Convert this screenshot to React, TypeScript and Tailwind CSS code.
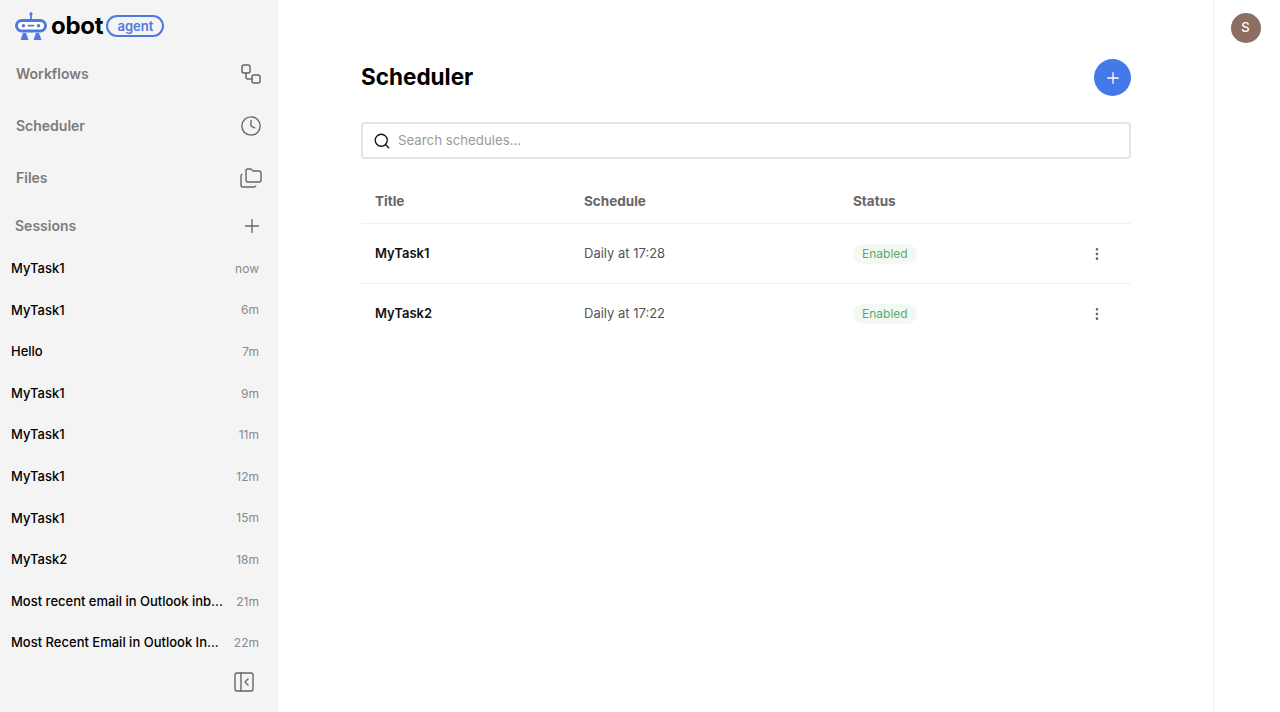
import { Workflow, Clock, Folders, Plus, PanelLeftClose, Search, EllipsisVertical } from "lucide-react";

const FONT = "font-['Inter','Noto_Sans','Liberation_Sans',sans-serif]";

const sessions: [string, string][] = [
  ["MyTask1", "now"],
  ["MyTask1", "6m"],
  ["Hello", "7m"],
  ["MyTask1", "9m"],
  ["MyTask1", "11m"],
  ["MyTask1", "12m"],
  ["MyTask1", "15m"],
  ["MyTask2", "18m"],
  ["Most recent email in Outlook inb...", "21m"],
  ["Most Recent Email in Outlook In...", "22m"],
];

const tasks: [string, string][] = [
  ["MyTask1", "Daily at 17:28"],
  ["MyTask2", "Daily at 17:22"],
];

function RobotLogo() {
  return (
    <svg width="32" height="28" viewBox="0 0 32 28" fill="none" aria-hidden="true">
      <path d="M16 1V8" stroke="#4f78e0" strokeWidth="1.8" strokeLinecap="round" />
      <circle cx="16" cy="2" r="1.6" fill="#4f78e0" />
      <rect x="1.5" y="8.5" width="29" height="10.5" rx="5.2" stroke="#4f78e0" strokeWidth="3" fill="#fff" />
      <circle cx="8.5" cy="13.7" r="1.7" fill="#4f78e0" />
      <circle cx="23.5" cy="13.7" r="1.7" fill="#4f78e0" />
      <path d="M13.5 13.7H18.5" stroke="#4f78e0" strokeWidth="1.8" strokeLinecap="round" />
      <path d="M8 21H11L13.5 28H5.5Z" fill="#4f78e0" />
      <path d="M21 21H24L26.5 28H18.5Z" fill="#4f78e0" />
    </svg>
  );
}

function NavRow({ label, icon }: { label: string; icon: React.ReactNode }) {
  return (
    <div className="flex h-[52px] items-center justify-between pr-[16px] pl-[16px]">
      <span className="pb-[2px] text-[14px] font-semibold text-[#7b7b7b]">{label}</span>
      {icon}
    </div>
  );
}

export default function App() {
  return (
    <div className={`flex h-[712px] w-[1280px] overflow-hidden bg-white text-black ${FONT}`}>
      <aside className="flex w-[278px] shrink-0 flex-col bg-[#f4f4f4]">
        <div className="flex h-[48px] items-center pt-[4px] pl-[15px]">
          <RobotLogo />
          <span className="ml-[4px] text-[24px] leading-none font-bold tracking-[-0.25px] text-black">obot</span>
          <span className="ml-[3px] flex h-[22px] w-[58px] items-center justify-center rounded-full border-2 border-[#4f78e0] text-[13px] leading-none font-semibold text-[#4f78e0]">
            agent
          </span>
        </div>
        <NavRow label="Workflows" icon={<Workflow size={24} strokeWidth={1.5} className="mr-[-1px] text-[#666]" />} />
        <NavRow label="Scheduler" icon={<Clock size={22} strokeWidth={1.5} className="text-[#666]" />} />
        <NavRow label="Files" icon={<Folders size={24} strokeWidth={1.4} className="mr-[-1px] text-[#666]" />} />
        <div className="flex h-[44px] items-center justify-between pr-[15px] pl-[15px]">
          <span className="pb-[2px] text-[14px] font-semibold text-[#7b7b7b]">Sessions</span>
          <Plus size={22} strokeWidth={1.5} className="text-[#666]" />
        </div>
        <ul className="flex flex-col">
          {sessions.map(([title, time], i) => (
            <li key={i} className="flex h-[41.6px] items-center justify-between gap-2 pr-[19px] pl-[11px]">
              <span className="text-[13px] font-medium whitespace-nowrap text-black">{title}</span>
              <span className="shrink-0 text-[12px] text-[#8a8a8a]">{time}</span>
            </li>
          ))}
        </ul>
        <div className="flex flex-1 items-center justify-end pr-[22px] pb-[11px]">
          <PanelLeftClose size={24} strokeWidth={1.4} className="text-[#666]" />
        </div>
      </aside>

      <main className="flex min-w-0 flex-1 flex-col pt-[59px] pr-[82px] pl-[83px]">
        <div className="flex h-[37px] items-center justify-between">
          <h1 className="text-[22.5px] leading-none font-bold text-black">Scheduler</h1>
          <button className="flex h-[37px] w-[37px] items-center justify-center rounded-full bg-[#4479ea] text-white">
            <Plus size={18} strokeWidth={1.75} />
          </button>
        </div>
        <div className="mt-[26px] flex h-[37px] items-center gap-[7px] rounded-[4px] border-2 border-[#e4e4e4] pl-[10px]">
          <Search size={18} strokeWidth={1.75} className="text-[#111]" />
          <span className="text-[13.25px] text-[#9a9a9a]">Search schedules...</span>
        </div>
        <div className="mt-[21px] grid h-[44px] grid-cols-[209px_269px_1fr] items-center border-b border-[#f0f0f0] pl-[14px] text-[13.5px] font-bold text-[#666]">
          <span>Title</span>
          <span>Schedule</span>
          <span>Status</span>
        </div>
        {tasks.map(([title, schedule], i) => (
          <div
            key={i}
            className={`grid h-[60px] grid-cols-[209px_269px_1fr_auto] items-center pr-[26px] pl-[14px] ${i === 0 ? "border-b border-[#f0f0f0]" : ""}`}
          >
            <span className="text-[13px] font-semibold text-[#111]">{title}</span>
            <span className="text-[13px] text-[#555]">{schedule}</span>
            <span className="flex">
              <span className="flex h-[20px] items-center rounded-full bg-[#f2f9f3] px-[9px] text-[12px] text-[#5aa870]">
                Enabled
              </span>
            </span>
            <EllipsisVertical size={16} strokeWidth={2} className="text-[#666]" />
          </div>
        ))}
      </main>

      <aside className="flex w-[67px] shrink-0 justify-center border-l border-[#f0f0f0] pt-[13px] pr-[3px]">
        <div className="flex h-[30px] w-[30px] items-center justify-center rounded-full bg-[#8d6e63] text-[13px] font-medium text-white">
          S
        </div>
      </aside>
    </div>
  );
}
